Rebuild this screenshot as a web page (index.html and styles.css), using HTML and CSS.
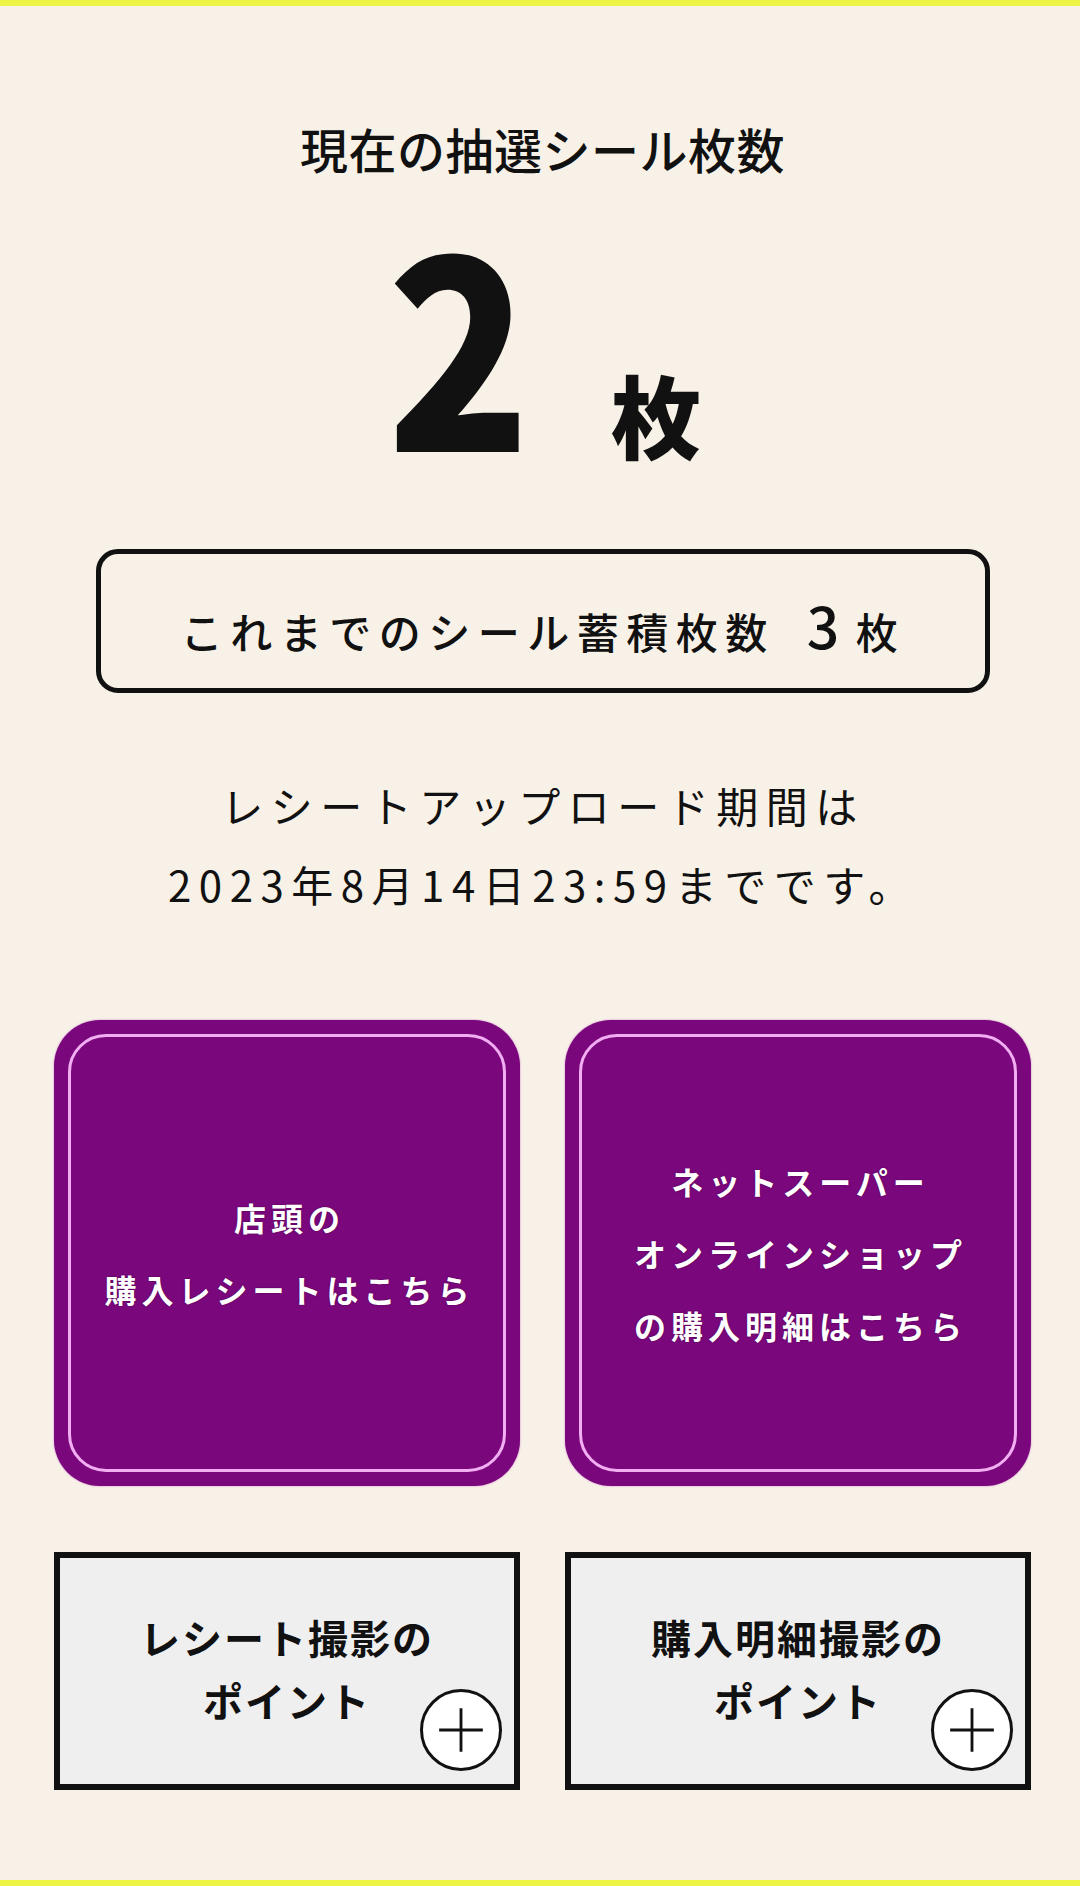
FILE: index.html
```html
<!DOCTYPE html>
<html lang="ja">
<head>
<meta charset="utf-8">
<title>抽選シール枚数</title>
<link rel="stylesheet" href="styles.css">
</head>
<body>
<div class="page">
  <h1 class="title">現在の抽選シール枚数</h1>
  <div class="count"><span class="num">2</span><span class="unit">枚</span></div>
  <div class="total"><span class="total-text">これまでのシール蓄積枚数<span class="tnum">3</span>枚</span></div>
  <p class="period">レシートアップロード期間は<br>2023年8月14日23:59までです。</p>
  <div class="buttons">
    <a class="pbtn" href="#"><span class="pbtn-text">店頭の<br>購入レシートはこちら</span></a>
    <a class="pbtn" href="#"><span class="pbtn-text">ネットスーパー<br>オンラインショップ<br>の購入明細はこちら</span></a>
  </div>
  <div class="tips">
    <div class="tip">
      <span class="tip-text">レシート撮影の<br>ポイント</span>
      <span class="plus"><svg viewBox="0 0 80 80" width="76" height="76"><path d="M17 40H63M40 17V63" stroke="#111" stroke-width="3" fill="none"/></svg></span>
    </div>
    <div class="tip">
      <span class="tip-text">購入明細撮影の<br>ポイント</span>
      <span class="plus"><svg viewBox="0 0 80 80" width="76" height="76"><path d="M17 40H63M40 17V63" stroke="#111" stroke-width="3" fill="none"/></svg></span>
    </div>
  </div>
</div>
</body>
</html>
```

FILE: styles.css
```css
html, body {
  margin: 0;
  padding: 0;
}
body {
  background: #f8f1e7;
  font-family: "Noto Sans CJK JP", "Noto Sans", sans-serif;
  color: #111;
}
.page {
  box-sizing: border-box;
  height: 1886px;
  border-top: 6px solid #eef443;
  border-bottom: 6px solid #eef443;
  display: flex;
  flex-direction: column;
}
.title {
  margin: 113px 0 0 5px;
  font-size: 48px;
  line-height: 58px;
  font-weight: 500;
  text-align: center;
  letter-spacing: 0.5px;
}
.count {
  margin-top: 30px;
  height: 270px;
  display: flex;
  justify-content: center;
  align-items: baseline;
}
.num {
  display: inline-block;
  font-size: 262px;
  line-height: 1;
  font-weight: 900;
  transform: scaleX(0.9);
}
.unit {
  font-size: 90px;
  line-height: 1;
  font-weight: 900;
  margin-left: 72px;
}
.total {
  margin: 72px 90px 0 96px;
  height: 144px;
  box-sizing: border-box;
  border: 5px solid #111;
  border-radius: 22px;
  display: flex;
  align-items: center;
  justify-content: center;
  padding-top: 12px;
}
.total-text {
  font-size: 42px;
  font-weight: 500;
  letter-spacing: 7.5px;
  line-height: 60px;
}
.tnum {
  font-size: 57px;
  font-weight: 500;
  margin: 0 9px 0 32px;
}
.period {
  margin: 72px 0 0 6px;
  font-size: 42px;
  line-height: 79px;
  letter-spacing: 7.5px;
  text-align: center;
  font-weight: 400;
}
.buttons {
  margin: 97px 49px 0 54px;
  display: grid;
  grid-template-columns: 1fr 1fr;
  gap: 45px;
}
.pbtn {
  position: relative;
  height: 466px;
  border-radius: 46px;
  background: #7b077d;
  display: flex;
  align-items: center;
  justify-content: center;
  text-decoration: none;
  box-shadow: 0 0 2px #c77ac9;
}
.pbtn::before {
  content: "";
  position: absolute;
  inset: 14px;
  border: 3px solid #f2aef2;
  border-radius: 38px;
}
.pbtn-text {
  color: #fff;
  font-size: 32px;
  font-weight: 700;
  line-height: 72px;
  letter-spacing: 5px;
  text-align: center;
  text-shadow: 0 0 2px rgba(60, 0, 60, 0.8);
  padding-left: 5px;
}
.tips {
  margin: 66px 49px 0 54px;
  display: grid;
  grid-template-columns: 1fr 1fr;
  gap: 45px;
}
.tip {
  position: relative;
  height: 238px;
  box-sizing: border-box;
  border: 6px solid #111;
  background: #efeff0;
  display: flex;
  align-items: center;
  justify-content: center;
}
.tip-text {
  font-size: 40px;
  font-weight: 700;
  line-height: 63px;
  letter-spacing: 2px;
  text-align: center;
  margin-top: -4px;
}
.plus {
  position: absolute;
  right: 12px;
  bottom: 13px;
  width: 82px;
  height: 82px;
  box-sizing: border-box;
  border: 3px solid #111;
  border-radius: 50%;
  background: #fff;
  display: flex;
  align-items: center;
  justify-content: center;
}
.plus svg {
  display: block;
}
```
